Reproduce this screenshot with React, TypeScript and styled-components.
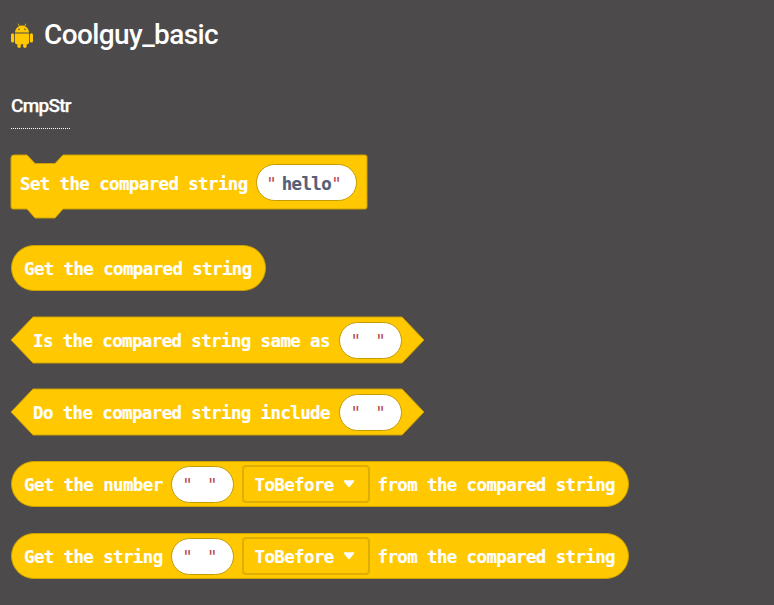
import React from 'react';
import styled, { createGlobalStyle } from 'styled-components';

const BLOCK_FILL = '#ffc800';
const BLOCK_EDGE = '#cca000';

const GlobalStyle = createGlobalStyle`
  html, body {
    margin: 0;
    padding: 0;
    background: #4c4a4b;
    font-family: Roboto, "Liberation Sans", sans-serif;
  }
`;

const Page = styled.div`
  width: 774px;
  height: 605px;
  box-sizing: border-box;
  padding: 16px 0 0 11px;
  overflow: hidden;
`;

const Header = styled.div`
  display: flex;
  align-items: center;
  gap: 11px;
  height: 36px;
`;

const PackageIcon = styled.svg`
  width: 22px;
  height: 25px;
  margin-top: 3px;
  color: ${BLOCK_FILL};
`;

const Title = styled.h1`
  margin: 0;
  font-size: 28px;
  font-weight: 500;
  letter-spacing: -0.6px;
  color: #fff;
`;

const Section = styled.h2`
  box-sizing: border-box;
  width: 59px;
  height: 35px;
  margin: 42px 0 26px;
  font-size: 19px;
  line-height: 24px;
  font-weight: 500;
  letter-spacing: -0.73px;
  -webkit-text-stroke: 0.25px #fff;
  white-space: nowrap;
  color: #fff;
  border-bottom: 1px dotted #fff;
`;

const Blocks = styled.div`
  display: flex;
  flex-direction: column;
  align-items: flex-start;
  gap: 26px;
`;

const Block = styled.div<{ $left: number; $right: number }>`
  position: relative;
  display: inline-flex;
  align-items: center;
  box-sizing: border-box;
  height: 46px;
  padding: 0 ${(p) => p.$right}px 0 ${(p) => p.$left}px;
  font-family: "DejaVu Sans Mono", "Liberation Mono", monospace;
  font-size: 17.4px;
  font-weight: 700;
  letter-spacing: -0.575px;
  line-height: 20px;
  -webkit-text-stroke: 0.2px currentColor;
  color: #fff;
  white-space: pre;
`;

const Statement = styled(Block)`
  height: 55px;
  margin-bottom: 9px;
`;

const Pill = styled(Block)`
  background: ${BLOCK_FILL};
  border: 1px solid ${BLOCK_EDGE};
  border-radius: 23px;
`;

const Shape = styled.svg`
  position: absolute;
  left: 0;
  top: 0;
  overflow: visible;
`;

const Label = styled.span<{ $gap?: number }>`
  position: relative;
  padding-top: 2px;
  margin-right: ${(p) => p.$gap ?? 0}px;
`;

const Input = styled.span<{ $width: number; $gap?: number }>`
  position: relative;
  display: inline-flex;
  align-items: center;
  justify-content: center;
  box-sizing: border-box;
  width: ${(p) => p.$width}px;
  height: 37px;
  margin-right: ${(p) => p.$gap ?? 0}px;
  padding-right: 5px;
  background: #fff;
  border: 1px solid #c49b00;
  border-radius: 19px;
  color: #575e75;
`;

const Quote = styled.span`
  padding-top: 2px;
  font-weight: 400;
  -webkit-text-stroke: 0;
  color: #b9474a;
`;

const Value = styled.span`
  display: inline-block;
  box-sizing: border-box;
  min-width: 15px;
  padding: 2px 0 0 5.6px;
  text-align: center;
`;

const Dropdown = styled.span`
  position: relative;
  display: inline-flex;
  align-items: center;
  box-sizing: border-box;
  width: 128px;
  height: 38px;
  margin-right: 8px;
  padding: 2px 0 0 11px;
  border: 2px solid rgba(0, 0, 0, 0.13);
  border-radius: 4px;
`;

const Caret = styled.svg`
  width: 12px;
  height: 8px;
  margin: -2px 0 0 9px;
`;

const statementPath = (w: number, h: number) =>
  `M 0 3 a 3 3 0 0 1 3 -3 h 13 l 8 8.5 h 20 l 8 -8.5 H ${w - 2} a 2 2 0 0 1 2 2 V ${h - 2} a 2 2 0 0 1 -2 2 H 52 l -8 9 h -20 l -8 -9 H 2 a 2 2 0 0 1 -2 -2 Z`;

const hexPath = (w: number, h: number) =>
  `M 0 ${h / 2} L 22 0 H ${w - 22} L ${w} ${h / 2} L ${w - 22} ${h} H 22 Z`;

const AndroidIcon: React.FC = () => (
  <PackageIcon viewBox="0 0 22 25" fill="currentColor">
    <path d="M4 9.6 C4 6.4 6 4 8 3.2 L6.6 0.8 L7.2 0.4 L8.7 2.9 C10.2 2.4 11.8 2.4 13.3 2.9 L14.8 0.4 L15.4 0.8 L14 3.2 C16 4 18 6.4 18 9.6 Z" />
    <circle cx="8" cy="6.2" r="0.8" fill="#4c4a4b" />
    <circle cx="14" cy="6.2" r="0.8" fill="#4c4a4b" />
    <path d="M4 10.4 H18 V19.6 A1.6 1.6 0 0 1 16.4 21.2 H5.6 A1.6 1.6 0 0 1 4 19.6 Z" />
    <rect x="0" y="10.2" width="3.2" height="9.4" rx="1.6" />
    <rect x="18.8" y="10.2" width="3.2" height="9.4" rx="1.6" />
    <rect x="6.4" y="18" width="3.4" height="7" rx="1.7" />
    <rect x="12.2" y="18" width="3.4" height="7" rx="1.7" />
  </PackageIcon>
);

const StringInput: React.FC<{ value?: string; width: number; gap?: number }> = ({
  value = '',
  width,
  gap,
}) => (
  <Input $width={width} $gap={gap}>
    <Quote>"</Quote>
    <Value>{value}</Value>
    <Quote>"</Quote>
  </Input>
);

const ToBefore: React.FC = () => (
  <Dropdown>
    ToBefore
    <Caret viewBox="0 0 12 8">
      <path
        d="M1.5 1 H10.5 L6 6.5 Z"
        fill="#fff"
        stroke="#fff"
        strokeWidth="1.6"
        strokeLinejoin="round"
      />
    </Caret>
  </Dropdown>
);

const HexBlock: React.FC<{ text: string }> = ({ text }) => (
  <Block $left={22} $right={22}>
    <Shape width={413} height={46}>
      <path d={hexPath(413, 46)} fill={BLOCK_FILL} stroke={BLOCK_EDGE} />
    </Shape>
    <Label $gap={9}>{text}</Label>
    <StringInput width={63} />
  </Block>
);

const NumberBlock: React.FC<{ text: string }> = ({ text }) => (
  <Pill $left={12} $right={13.4}>
    <Label $gap={8}>{text}</Label>
    <StringInput width={63} gap={8} />
    <ToBefore />
    <Label>from the compared string</Label>
  </Pill>
);

const App: React.FC = () => (
  <>
    <GlobalStyle />
    <Page>
      <Header>
        <AndroidIcon />
        <Title>Coolguy_basic</Title>
      </Header>
      <Section>CmpStr</Section>
      <Blocks>
        <Statement $left={9} $right={10}>
          <Shape width={356} height={55}>
            <path d={statementPath(356, 54)} fill={BLOCK_FILL} stroke={BLOCK_EDGE} />
          </Shape>
          <Label $gap={8}>Set the compared string</Label>
          <StringInput value="hello" width={101} />
        </Statement>
        <Pill $left={12} $right={13.4}>
          <Label>Get the compared string</Label>
        </Pill>
        <HexBlock text="Is the compared string same as" />
        <HexBlock text="Do the compared string include" />
        <NumberBlock text="Get the number" />
        <NumberBlock text="Get the string" />
      </Blocks>
    </Page>
  </>
);

export default App;
